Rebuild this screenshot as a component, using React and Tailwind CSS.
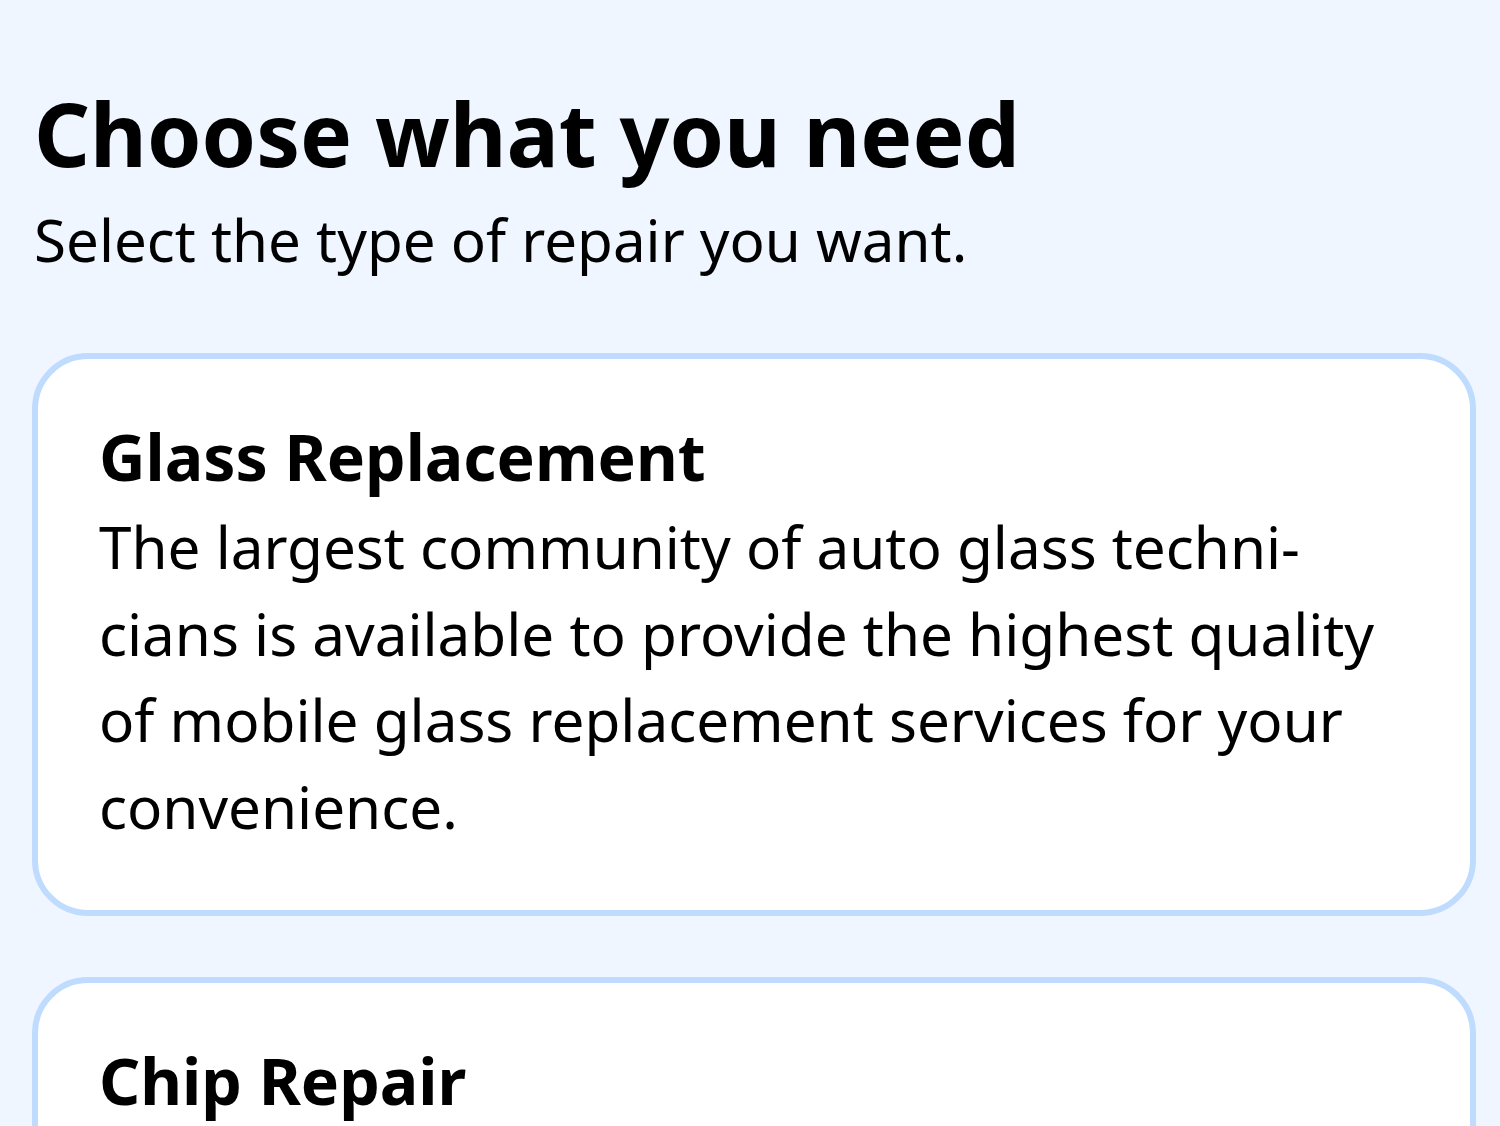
export default function App() {
  const font = { fontFamily: '"Noto Sans", "Open Sans", sans-serif' };
  return (
    <div className="w-[1500px] h-[1126px] overflow-hidden bg-[#eff6ff] text-black" style={font}>
      <div className="pl-[32px] pr-[24px] pt-[79px]">
        <h1 className="pl-[2px] text-[87.4px] font-bold leading-[110px]">Choose what you need</h1>
        <p className="pl-[2px] mt-[8px] text-[58.3px] leading-[86.4px]">Select the type of repair you want.</p>
        <div className="mt-[70px] flex flex-col gap-[61px]">
          <div className="rounded-[56px] border-[6px] border-[#bfdbfe] bg-white pl-[61px] pr-[70px] pt-[49px] pb-[60px]">
            <h2 className="text-[64.3px] font-bold leading-[96px]">Glass Replacement</h2>
            <p className="text-[58.4px] leading-[86.4px]">
              The largest community of auto glass techni{"\u00AD"}cians is available to provide the highest quality of mobile glass replacement services for your convenience.
            </p>
          </div>
          <div className="rounded-[56px] border-[6px] border-[#bfdbfe] bg-white pl-[61px] pr-[70px] pt-[49px] pb-[60px]">
            <h2 className="text-[64.3px] font-bold leading-[96px]">Chip Repair</h2>
            <p className="text-[58.4px] leading-[86.4px]">
              Fast and affordable windshield chip repair performed by certified technicians at your location.
            </p>
          </div>
        </div>
      </div>
    </div>
  );
}
